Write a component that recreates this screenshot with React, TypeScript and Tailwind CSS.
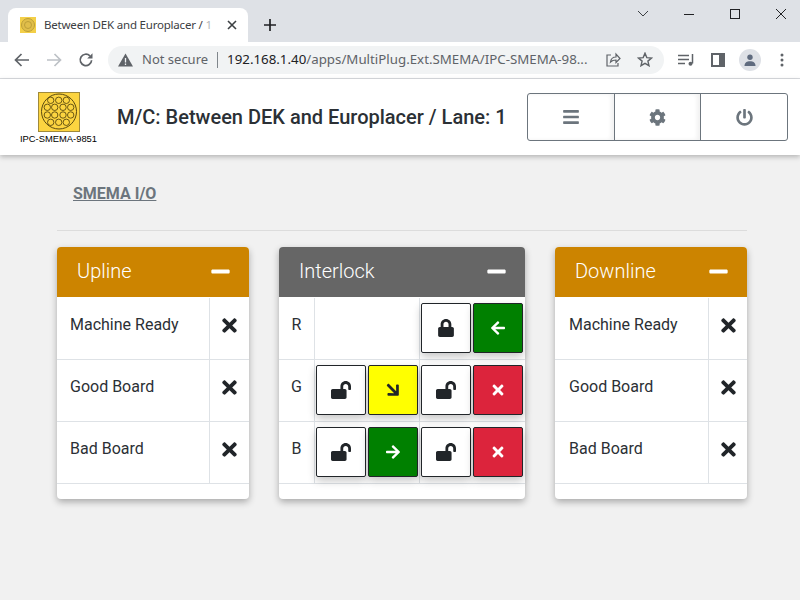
import React from "react";
import { FaBars, FaCog, FaPowerOff, FaTimes, FaLock, FaLockOpen, FaArrowLeft, FaArrowRight, FaMinus } from "react-icons/fa";

const chrome = { fontFamily: '"Noto Sans", "Open Sans", sans-serif' };

function Logo() {
  const circles = [
    [12.7, 8.3], [20.7, 8.3], [28.3, 8.3],
    [9.3, 15.3], [16.7, 15.3], [25, 15.3], [32.7, 15.3],
    [9.3, 23], [16.7, 23], [25, 23], [32.7, 23],
    [12.7, 30.3], [20.7, 30.3], [28.3, 30.3],
  ];
  return (
    <svg width="42" height="40" viewBox="0 0 42 40" className="block">
      <rect x="0.5" y="0.5" width="41" height="39" fill="#fcd440" stroke="#a08a3a" />
      <circle cx="21" cy="19.5" r="17.5" fill="none" stroke="#5a4a10" strokeWidth="1" />
      <g fill="none" stroke="#5a4a10" strokeWidth="0.9">
        {circles.map(([x, y], i) => (
          <circle key={i} cx={x} cy={y} r="3.2" />
        ))}
      </g>
    </svg>
  );
}

function Square({ bg, children }: { bg: string; children?: React.ReactNode }) {
  return (
    <div className={`w-[50px] h-[50px] flex items-center justify-center rounded-[2px] border border-[#212529] shadow-[0_4px_8px_rgba(0,0,0,0.22)] ${bg}`}>
      {children}
    </div>
  );
}

function Panel({ title, bg, w, children }: { title: string; bg: string; w: string; children: React.ReactNode }) {
  return (
    <div className={`${w} bg-white rounded-[4px] shadow-[0_3px_7px_rgba(0,0,0,0.3)] flex flex-col`}>
      <div className={`h-[50px] ${bg} rounded-t-[4px] flex items-center justify-between pl-5 pr-[18px] pb-[2px] text-white`}>
        <span className="text-[20px] font-light leading-none">{title}</span>
        <FaMinus className="text-[21px]" />
      </div>
      <div className="h-px" />
      {children}
      <div className="h-[15px]" />
    </div>
  );
}

function SignalRows({ right }: { right?: boolean }) {
  return (
    <div className="flex flex-col">
      {["Machine Ready", "Good Board", "Bad Board"].map((t) => (
        <div key={t} className="h-[62px] flex border-b border-[#dee2e6]">
          <div className={`flex-1 pt-[15px] text-[16px] leading-6 text-[#2b3035] ${right ? "pl-[14px]" : "pl-[13px]"}`}>{t}</div>
          <div className={`border-l border-[#dee2e6] flex justify-center pt-[17px] ${right ? "w-[39px]" : "w-[40px]"}`}>
            <FaTimes className="text-[#212529] text-[21px]" />
          </div>
        </div>
      ))}
    </div>
  );
}

const Open = () => <FaLockOpen className="text-[#212529] text-[20px]" />;
const X = () => <FaTimes className="text-white text-[16px]" />;

function Row({ label, left, right }: { label: string; left?: React.ReactNode; right: React.ReactNode }) {
  return (
    <div className="h-[62px] flex border-b border-[#dee2e6]">
      <div className="w-[36px] border-r border-[#dee2e6] text-center pt-[15px] text-[16px] leading-6 text-[#2b3035]">{label}</div>
      <div className="w-[105px] border-r border-[#dee2e6] flex gap-[2px] pl-[1px] pt-[5px]">{left}</div>
      <div className="flex-1 flex gap-[2px] pl-[1px] pt-[5px]">{right}</div>
    </div>
  );
}

export default function App() {
  return (
    <div className="w-[800px] h-[600px] overflow-hidden bg-[#f1f1f1] flex flex-col" style={{ fontFamily: "Roboto, sans-serif" }}>
      {/* Tab strip */}
      <div className="h-[42px] bg-[#dee1e6] flex items-end pl-2 relative">
        <div className="w-[240px] h-[34px] bg-white rounded-t-[8px] flex items-center pl-3 pr-[11px]" style={chrome}>
          <svg width="16" height="16" viewBox="0 0 16 16" className="shrink-0">
            <rect width="16" height="16" fill="#f3cf48" />
            <circle cx="8" cy="8" r="6.5" fill="#e0be4a" stroke="#bd9f38" />
            <circle cx="8" cy="8" r="3.5" fill="none" stroke="#bd9f38" />
          </svg>
          <span className="ml-2 text-[11.5px] text-[#3c4043] whitespace-nowrap flex-1 w-0 leading-none tracking-[-0.2px]">
            Between DEK and Europlacer / <span className="text-[#b4b6b9]">1</span>
          </span>
          <svg width="10" height="10" viewBox="0 0 10 10" className="ml-3 shrink-0"><path d="M1 1L9 9M9 1L1 9" stroke="#3c4043" strokeWidth="1.6" /></svg>
        </div>
        <svg width="12" height="12" viewBox="0 0 12 12" className="ml-[16px] mb-[11px]"><path d="M6 0V12M0 6H12" stroke="#202124" strokeWidth="1.7" /></svg>
        <div className="absolute right-0 top-0 h-[28px] flex items-center">
          <svg width="46" height="28" viewBox="0 0 46 28"><path d="M22 11l5 5 5-5" fill="none" stroke="#3c4043" /></svg>
          <svg width="46" height="28" viewBox="0 0 46 28"><path d="M22 14.500h10" stroke="#202124" /></svg>
          <svg width="46" height="28" viewBox="0 0 46 28"><rect x="22.500" y="9.500" width="9" height="9" fill="none" stroke="#202124" /></svg>
          <svg width="46" height="28" viewBox="0 0 46 28"><path d="M22 9l10 10M32 9L22 19" stroke="#202124" /></svg>
        </div>
      </div>
      {/* Toolbar */}
      <div className="h-[37px] bg-white border-b border-[#dadce0] flex items-center pl-[14px] pb-[1px]" style={chrome}>
        <svg width="16" height="14" viewBox="0 0 16 14"><path d="M15 7H2M7.500 1L1.500 7l6 6" fill="none" stroke="#5f6368" strokeWidth="1.7" /></svg>
        <svg width="16" height="14" viewBox="0 0 16 14" className="ml-[16px]"><path d="M1 7H14M8.500 1l6 6-6 6" fill="none" stroke="#bdc1c6" strokeWidth="1.7" /></svg>
        <svg width="16" height="16" viewBox="0 0 16 16" className="ml-[16px]"><path d="M13.600 8.200A5.700 5.700 0 1 1 11.900 3.800" fill="none" stroke="#5f6368" strokeWidth="1.7" /><path d="M14.500 1.200V6.600H9.200Z" fill="#5f6368" /></svg>
        <div className="ml-[14px] w-[556px] h-[28px] bg-[#f1f3f4] rounded-full flex items-center pl-[10px]">
          <svg width="15" height="14" viewBox="0 0 15 14" className="shrink-0"><path d="M7.500 0.500L15 13.500H0Z" fill="#5f6368" /><path d="M7.500 5v4.500M7.500 10.500v1.500" stroke="#f1f3f4" strokeWidth="1.300" /></svg>
          <span className="ml-[9px] text-[13px] text-[#5f6368] leading-none whitespace-nowrap">Not secure</span>
          <span className="ml-[9px] w-px h-[16px] bg-[#80868b]" />
          <span className="ml-[9px] text-[13.3px] leading-none whitespace-nowrap text-[#5f6368]"><span className="text-[#202124]">192.168.1.40</span>/apps/MultiPlug.Ext.SMEMA/IPC-SMEMA-98...</span>
          <svg width="16" height="15" viewBox="0 0 16 15" className="ml-[18px] shrink-0"><path d="M6 3H2v11h11v-3M5.500 10C6 6.500 8.500 5 11 5V2l4 4.500L11 10.500V8C8.500 8 7 8.500 5.500 10Z" fill="none" stroke="#5f6368" strokeWidth="1.200" /></svg>
          <svg width="16" height="15" viewBox="0 0 16 15" className="ml-[16px] shrink-0"><path d="M8 1.200L9.800 5.600 14.500 6 10.900 9.100 12 13.700 8 11.300 4 13.700 5.100 9.100 1.500 6 6.200 5.600Z" fill="none" stroke="#5f6368" strokeWidth="1.400" /></svg>
        </div>
        <svg width="16" height="14" viewBox="0 0 16 14" className="ml-[14px]"><path d="M0 2.500H11M0 6.500H11M0 10.500H7" stroke="#5f6368" strokeWidth="1.500" /><path d="M14.500 1v9.500" stroke="#5f6368" strokeWidth="1.500" /><circle cx="12.500" cy="10.800" r="2" fill="#5f6368" /></svg>
        <svg width="14" height="14" viewBox="0 0 14 14" className="ml-[17px]"><rect x="1" y="1" width="12" height="12" fill="none" stroke="#5f6368" strokeWidth="2" /><rect x="8" y="1" width="5" height="12" fill="#5f6368" /></svg>
        <div className="ml-[14px] w-[22px] h-[22px] rounded-full bg-[#dee1e6] flex items-center justify-center">
          <svg width="12" height="12" viewBox="0 0 12 12"><circle cx="6" cy="3.200" r="2.700" fill="#5f6b7e" /><path d="M0.500 12c0-3.500 2.500-4.700 5.500-4.700s5.500 1.200 5.500 4.700Z" fill="#5f6b7e" /></svg>
        </div>
        <svg width="4" height="14" viewBox="0 0 4 14" className="ml-[19px]"><circle cx="2" cy="2" r="1.500" fill="#5f6368" /><circle cx="2" cy="7" r="1.500" fill="#5f6368" /><circle cx="2" cy="12" r="1.500" fill="#5f6368" /></svg>
      </div>
      {/* App header */}
      <header className="h-[76px] bg-white shadow-[0_2px_5px_rgba(0,0,0,0.25)] flex items-start relative">
        <div className="w-[117px] flex flex-col items-center pt-[13px] shrink-0">
          <Logo />
          <span className="text-[9.4px] leading-none mt-[2px] text-black whitespace-nowrap" style={{ fontFamily: '"Liberation Sans", sans-serif' }}>IPC-SMEMA-9851</span>
        </div>
        <h1 className="pt-[26px] text-[20px] leading-6 font-medium text-[#2b3035] whitespace-nowrap">M/C: Between DEK and Europlacer / Lane: 1</h1>
        <div className="ml-auto mr-3 mt-[14px] w-[261px] h-[48px] flex rounded-[3px] border border-[#6c757d] text-[#6c757d]">
          <div className="w-[87px] flex items-center justify-center border-r border-[#6c757d] shadow-[inset_-3px_0_4px_rgba(0,0,0,0.06)]"><FaBars className="text-[18px]" /></div>
          <div className="w-[86px] flex items-center justify-center border-r border-[#6c757d] shadow-[inset_-3px_0_4px_rgba(0,0,0,0.06)]"><FaCog className="text-[17px]" /></div>
          <div className="flex-1 flex items-center justify-center"><FaPowerOff className="text-[17px]" /></div>
        </div>
      </header>
      {/* Body */}
      <main className="flex-1 pl-[57px] pr-[53px] pt-[30px]">
        <div className="pl-4 text-[16px] leading-[18px] font-bold text-[#6c757d] underline">SMEMA I/O</div>
        <div className="mt-[27px] border-t border-[#dcdcdc]" />
        <div className="mt-[15px] pt-px flex items-start">
          <Panel title="Upline" bg="bg-[#cc8400]" w="w-[192px]"><SignalRows /></Panel>
          <div className="w-[30px]" />
          <Panel title="Interlock" bg="bg-[#666666]" w="w-[246px]">
            <div className="flex flex-col">
              <Row label="R" right={<><Square bg="bg-white"><FaLock className="text-[#212529] text-[18px]" /></Square><Square bg="bg-[#008000]"><FaArrowLeft className="text-white text-[16px]" /></Square></>} />
              <Row label="G" left={<><Square bg="bg-white"><Open /></Square><Square bg="bg-[#ffff00]"><FaArrowRight className="text-[#212529] text-[18px] rotate-45" /></Square></>} right={<><Square bg="bg-white"><Open /></Square><Square bg="bg-[#dc243c]"><X /></Square></>} />
              <Row label="B" left={<><Square bg="bg-white"><Open /></Square><Square bg="bg-[#008000]"><FaArrowRight className="text-white text-[16px]" /></Square></>} right={<><Square bg="bg-white"><Open /></Square><Square bg="bg-[#dc243c]"><X /></Square></>} />
            </div>
          </Panel>
          <div className="w-[30px]" />
          <Panel title="Downline" bg="bg-[#cc8400]" w="w-[192px]"><SignalRows right /></Panel>
        </div>
      </main>
    </div>
  );
}
